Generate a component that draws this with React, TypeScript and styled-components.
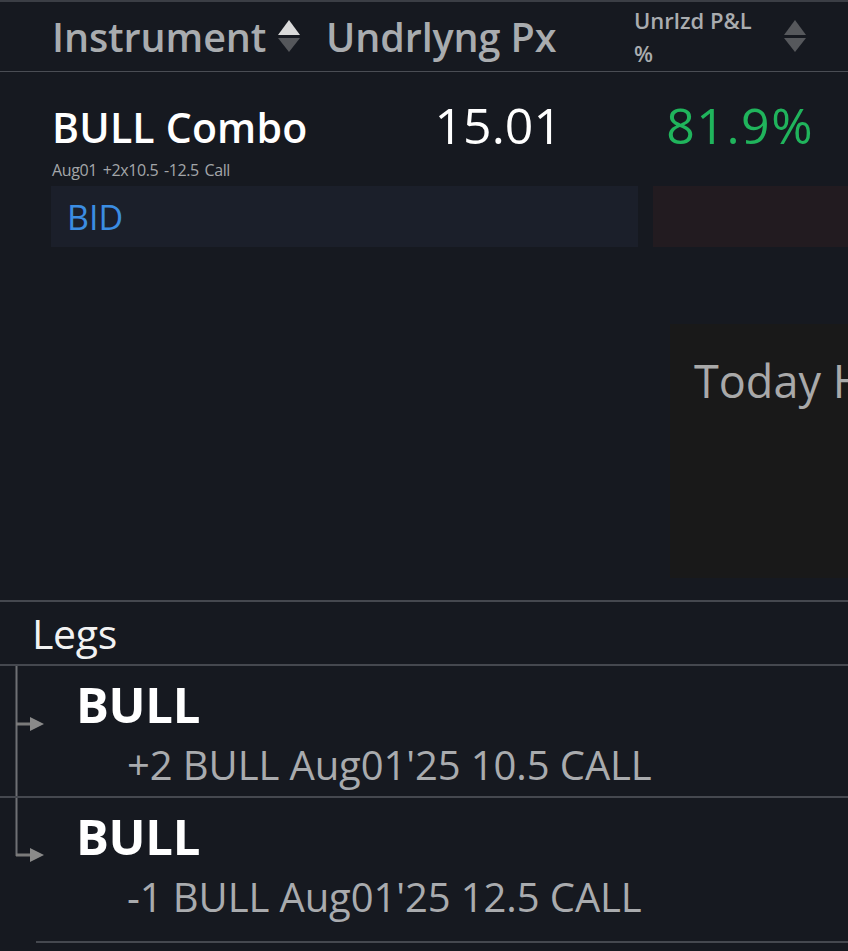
import React from "react";
import styled, { createGlobalStyle } from "styled-components";

const Global = createGlobalStyle`
  html, body { margin: 0; padding: 0; background: #161920; }
  * { box-sizing: border-box; }
`;

const Screen = styled.div`
  width: 848px;
  height: 951px;
  overflow: hidden;
  background: #161920;
  font-family: "Open Sans", "Noto Sans", sans-serif;
  color: #ffffff;
  border-top: 2px solid #3b3e45;
`;

const HeaderRow = styled.div`
  display: grid;
  grid-template-columns: 274px 232px 76px 200px;
  padding-left: 52px;
  height: 70px;
  align-items: center;
  border-bottom: 1px solid #4a4d54;
`;

const HeadCell = styled.div`
  display: flex;
  align-items: center;
  gap: 12px;
  font-size: 39.5px;
  font-weight: 600;
  color: #a9acaf;
  letter-spacing: -0.1px;
  white-space: nowrap;
`;

const HeadSmall = styled.div`
  grid-column: 4;
  display: flex;
  align-items: center;
  gap: 22px;
`;

const SmallLabel = styled.div`
  font-size: 22px;
  font-weight: 600;
  line-height: 33px;
  color: #a9acaf;
  width: 128px;
`;

const Sort = ({ active }: { active?: boolean }) => (
  <svg width="22" height="33" viewBox="0 0 22 33">
    <polygon points="0,15 11,0 22,15" fill={active ? "#dadada" : "#56585c"} />
    <polygon points="0,18 11,32 22,18" fill={active ? "#55575b" : "#56585c"} />
  </svg>
);

const DataRow = styled.div`
  display: grid;
  grid-template-columns: 274px 232px 76px 180px;
  padding-left: 52px;
  padding-top: 27px;
  align-items: start;
`;

const InstName = styled.div`
  font-size: 41px;
  font-weight: 600;
  line-height: 56px;
  letter-spacing: 0.2px;
  white-space: nowrap;
`;

const Value = styled.div<{ $green?: boolean }>`
  grid-column: ${(p) => (p.$green ? 4 : 2)};
  justify-self: end;
  font-size: 50px;
  line-height: 56px;
  margin-top: -2px;
  margin-right: ${(p) => (p.$green ? "0" : "-4px")};
  letter-spacing: ${(p) => (p.$green ? "1.5px" : "0")};
  color: ${(p) => (p.$green ? "#20b45c" : "#ffffff")};
  white-space: nowrap;
`;

const SubLine = styled.div`
  padding-left: 52px;
  margin-top: 6px;
  font-size: 16px;
  line-height: 18px;
  color: #a3a6a9;
  letter-spacing: -0.4px;
  word-spacing: 2px;
`;

const QuoteRow = styled.div`
  display: grid;
  grid-template-columns: 587px 1fr;
  gap: 15px;
  padding-left: 51px;
  margin-top: 7px;
  height: 61px;
`;

const QuoteBox = styled.div<{ $bg: string }>`
  background: ${(p) => p.$bg};
  display: flex;
  align-items: center;
  padding-left: 16px;
  font-size: 34px;
  color: #3b8de2;
`;

const ChartArea = styled.div`
  height: 355px;
  display: flex;
  justify-content: flex-end;
  padding-top: 77px;
  padding-bottom: 22px;
  border-bottom: 2px solid #45484f;
`;

const TodayBox = styled.div`
  width: 178px;
  background: #191919;
  padding: 25px 0 0 24px;
  font-size: 45px;
  line-height: 64px;
  color: #a9a9a9;
  white-space: nowrap;
  overflow: hidden;
`;

const LegsHeader = styled.div`
  height: 64px;
  padding-left: 32px;
  display: flex;
  align-items: center;
  font-size: 41px;
  color: #f2f2f2;
  border-bottom: 2px solid #45484f;
  letter-spacing: -0.3px;
`;

const LegRow = styled.div<{ $h: number; $last?: boolean }>`
  display: grid;
  grid-template-columns: 78px 1fr;
  height: ${(p) => p.$h}px;
  ${(p) => (p.$last ? "" : "border-bottom: 2px solid #45484f;")}
`;

const Connector = styled.svg`
  width: 78px;
  height: 100%;
  display: block;
`;

const LegBody = styled.div<{ $top: number }>`
  padding-top: ${(p) => p.$top}px;
`;

const LegName = styled.div`
  font-size: 49px;
  font-weight: 700;
  line-height: 56px;
  margin-left: -2px;
  letter-spacing: -0.3px;
`;

const LegDesc = styled.div`
  padding-left: 49px;
  margin-top: 8px;
  font-size: 40px;
  line-height: 50px;
  color: #a9abae;
  letter-spacing: -0.1px;
  white-space: nowrap;
`;

const BottomRule = styled.div`
  margin-left: 36px;
  border-top: 2px solid #45484f;
`;

const Leg = ({ last, arrowY, h, top, desc }: { last?: boolean; arrowY: number; h: number; top: number; desc: string }) => (
  <LegRow $h={h} $last={last}>
    <Connector>
      <line x1="16.5" y1="0" x2="16.5" y2={last ? arrowY + 1 : "100%"} stroke="#6e7074" strokeWidth="2" />
      <line x1="16" y1={arrowY} x2="31" y2={arrowY} stroke="#7a7a7a" strokeWidth="3" />
      <polygon points={`30,${arrowY - 7} 44,${arrowY} 30,${arrowY + 7}`} fill="#8a8a8a" />
    </Connector>
    <LegBody $top={top}>
      <LegName>BULL</LegName>
      <LegDesc>{desc}</LegDesc>
    </LegBody>
  </LegRow>
);

export default function App() {
  return (
    <>
      <Global />
      <Screen>
        <HeaderRow>
          <HeadCell>
            Instrument <Sort active />
          </HeadCell>
          <HeadCell>Undrlyng Px</HeadCell>
          <HeadSmall>
            <SmallLabel>
              Unrlzd P&amp;L
              <br />%
            </SmallLabel>
            <Sort />
          </HeadSmall>
        </HeaderRow>
        <DataRow>
          <InstName>BULL Combo</InstName>
          <Value>15.01</Value>
          <Value $green>81.9%</Value>
        </DataRow>
        <SubLine>Aug01 +2x10.5 -12.5 Call</SubLine>
        <QuoteRow>
          <QuoteBox $bg="#1b1f2a">BID</QuoteBox>
          <QuoteBox $bg="#221b20" />
        </QuoteRow>
        <ChartArea>
          <TodayBox>Today H</TodayBox>
        </ChartArea>
        <LegsHeader>Legs</LegsHeader>
        <Leg arrowY={58} h={132} top={10} desc="+2 BULL Aug01'25 10.5 CALL" />
        <Leg last arrowY={57} h={143} top={10} desc="-1 BULL Aug01'25 12.5 CALL" />
        <BottomRule />
      </Screen>
    </>
  );
}
